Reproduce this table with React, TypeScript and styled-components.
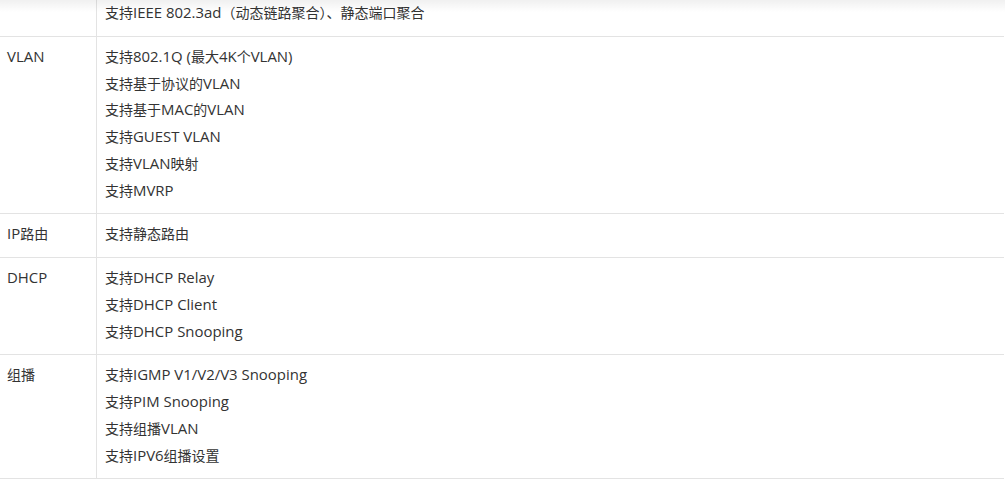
import styled, { createGlobalStyle } from "styled-components";

interface Spec {
  name: string;
  items: string[];
}

const specs: Spec[] = [
  { name: "", items: ["支持IEEE 802.3ad（动态链路聚合）、静态端口聚合"] },
  {
    name: "VLAN",
    items: [
      "支持802.1Q (最大4K个VLAN)",
      "支持基于协议的VLAN",
      "支持基于MAC的VLAN",
      "支持GUEST VLAN",
      "支持VLAN映射",
      "支持MVRP",
    ],
  },
  { name: "IP路由", items: ["支持静态路由"] },
  {
    name: "DHCP",
    items: ["支持DHCP Relay", "支持DHCP Client", "支持DHCP Snooping"],
  },
  {
    name: "组播",
    items: [
      "支持IGMP V1/V2/V3 Snooping",
      "支持PIM Snooping",
      "支持组播VLAN",
      "支持IPV6组播设置",
    ],
  },
];

// latin runs render a touch wider than the cjk ones in the original
const MixedText = ({ text }: { text: string }) => {
  const parts = text.split(/([\x20-\x7E]+)/).filter((p) => p !== "");
  return (
    <>
      {parts.map((p, i) =>
        /^[\x20-\x7E]+$/.test(p) ? <Latin key={i}>{p}</Latin> : p
      )}
    </>
  );
};

const GlobalStyle = createGlobalStyle`
  html, body {
    margin: 0;
    padding: 0;
    background: #ffffff;
  }
  body {
    font-family: "Open Sans", "Noto Sans CJK SC", sans-serif;
    color: #333333;
    overflow: hidden;
  }
`;

const App = () => {
  return (
    <>
      <GlobalStyle />
      <Viewport>
        <TopShade />
        <SpecTable>
          <tbody>
            {specs.map((spec, i) => (
              <tr key={i}>
                <NameCell>
                  <MixedText text={spec.name} />
                </NameCell>
                <ValueCell>
                  {spec.items.map((item) => (
                    <Line key={item}>
                      <MixedText text={item} />
                    </Line>
                  ))}
                </ValueCell>
              </tr>
            ))}
          </tbody>
        </SpecTable>
      </Viewport>
    </>
  );
};

export default App;

const Viewport = styled.div`
  position: relative;
  width: 1005px;
  height: 479px;
  overflow: hidden;
`;

const TopShade = styled.div`
  position: absolute;
  top: 0;
  left: 0;
  right: 0;
  height: 12px;
  background: linear-gradient(rgba(0, 0, 0, 0.06), rgba(0, 0, 0, 0));
  pointer-events: none;
  z-index: 2;
`;

const SpecTable = styled.table`
  width: 1004px;
  margin-top: -7px;
  border-collapse: collapse;
  font-size: 14px;
  line-height: 26.75px;
`;

const NameCell = styled.td`
  width: 89px;
  padding: 7px 0 9px 7px;
  vertical-align: top;
  border-bottom: 1px solid #e3e3e3;
  border-right: 1px solid #e3e3e3;
`;

const ValueCell = styled.td`
  padding: 7px 8px 9px 8px;
  vertical-align: top;
  border-bottom: 1px solid #e3e3e3;
`;

const Line = styled.div`
  height: 26.75px;
  white-space: nowrap;
`;

const Latin = styled.span`
  font-size: 14.95px;
  line-height: 1;
`;
